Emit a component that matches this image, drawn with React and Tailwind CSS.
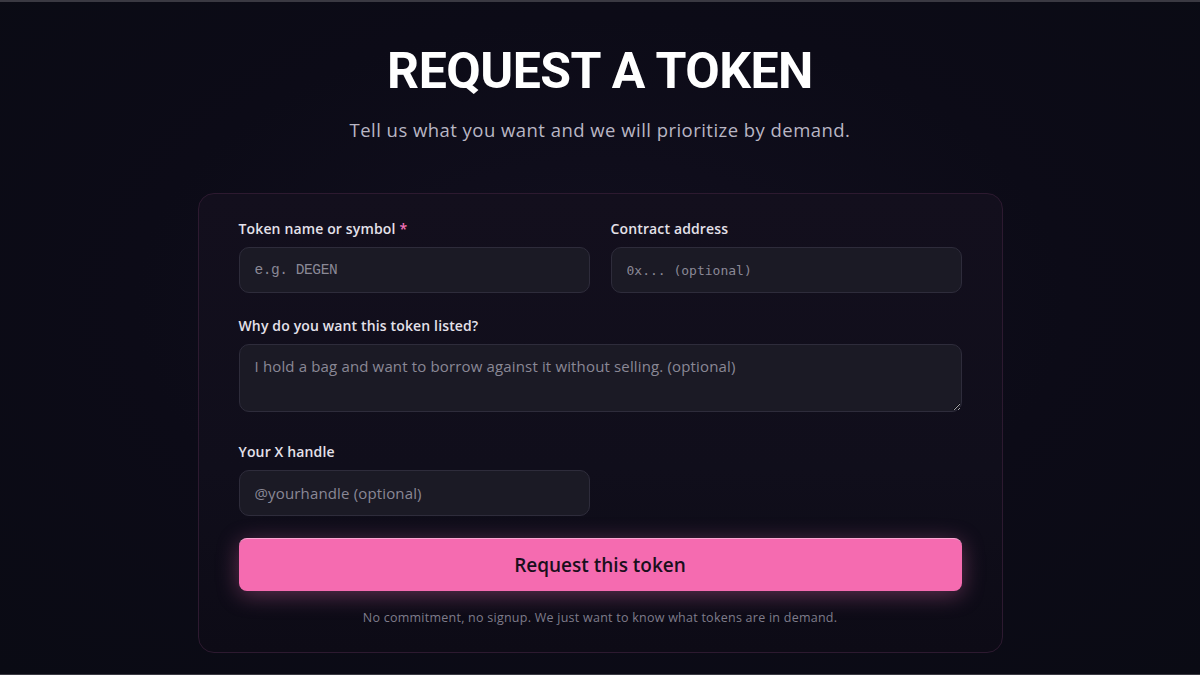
import { useState } from 'react';

var FONT = { fontFamily: '"Open Sans", "Noto Sans", sans-serif' };

function Field({ label, required, children }) {
  return (
    <div className="flex flex-col">
      <label className="text-[14px] font-semibold text-[#e4e1ea] leading-[20px] mb-[8px] tracking-[0.01em]">
        {label}
        {required && <span className="text-[#f472b6] ml-1">*</span>}
      </label>
      {children}
    </div>
  );
}

var inputCls =
  'w-full h-[46px] rounded-[10px] bg-[#1b1a25] border border-[#2e2c3b] px-[15px] text-white outline-none placeholder:text-[#8a8896]';

export default function App() {
  var [token, setToken] = useState('');

  return (
    <div
      className="w-[1200px] h-[675px] overflow-hidden border-t-2 border-b border-[#3a3942] bg-[radial-gradient(ellipse_at_50%_45%,#120f1f_0%,#0c0b17_55%,#0a0b14_100%)] flex flex-col items-center"
      style={FONT}
    >
      <h1 className="mt-[40px] text-[50px] leading-[58px] font-bold text-white tracking-[-0.01em] font-['Roboto',sans-serif]">
        REQUEST A TOKEN
      </h1>
      <p className="mt-[17px] text-[18.5px] text-[#b9b6c4] leading-[26px] tracking-[0.025em]">
        Tell us what you want and we will prioritize by demand.
      </p>

      <form
        className="mt-[50px] w-[805px] rounded-[16px] border border-[#2d1a30] bg-[linear-gradient(180deg,#130f1d_0%,#100e1b_60%,#0d0b16_100%)] px-[40px] pt-[25px] pb-[24px]"
        onSubmit={function (e) { e.preventDefault(); }}
      >
        <div className="grid grid-cols-2 gap-x-[21px]">
          <Field label="Token name or symbol" required>
            <input
              className={inputCls + ' text-[14.5px] font-["Liberation_Mono",monospace] tracking-[-0.03em]'}
              placeholder="e.g. DEGEN"
              value={token}
              onChange={function (e) { setToken(e.target.value); }}
            />
          </Field>
          <Field label="Contract address">
            <input className={inputCls + ' font-["DejaVu_Sans_Mono",monospace] text-[13px]'} placeholder="0x... (optional)" />
          </Field>
        </div>

        <div className="mt-[23px]">
          <Field label="Why do you want this token listed?">
            <textarea
              className="w-full h-[68px] rounded-[10px] bg-[#1b1a25] border border-[#2e2c3b] px-[15px] py-[10px] text-[15px] tracking-[0.01em] text-white outline-none placeholder:text-[#8a8896] resize-y"
              placeholder="I hold a bag and want to borrow against it without selling. (optional)"
            />
          </Field>
        </div>

        <div className="mt-[30px] grid grid-cols-2 gap-x-[21px]">
          <Field label="Your X handle">
            <input className={inputCls + ' text-[15px] tracking-[0.01em]'} placeholder="@yourhandle (optional)" />
          </Field>
        </div>

        <button
          type="submit"
          className="mt-[22px] w-full h-[53px] rounded-[8px] bg-[#f56bb0] border-t border-[#fba7d2] text-[19px] font-semibold text-[#1a0f1c] shadow-[0_4px_22px_rgba(244,114,182,0.35)]"
        >
          Request this token
        </button>

        <p className="mt-[18px] text-center text-[12.5px] tracking-[0.02em] text-[#7f7c8b]">
          No commitment, no signup. We just want to know what tokens are in demand.
        </p>
      </form>
    </div>
  );
}
